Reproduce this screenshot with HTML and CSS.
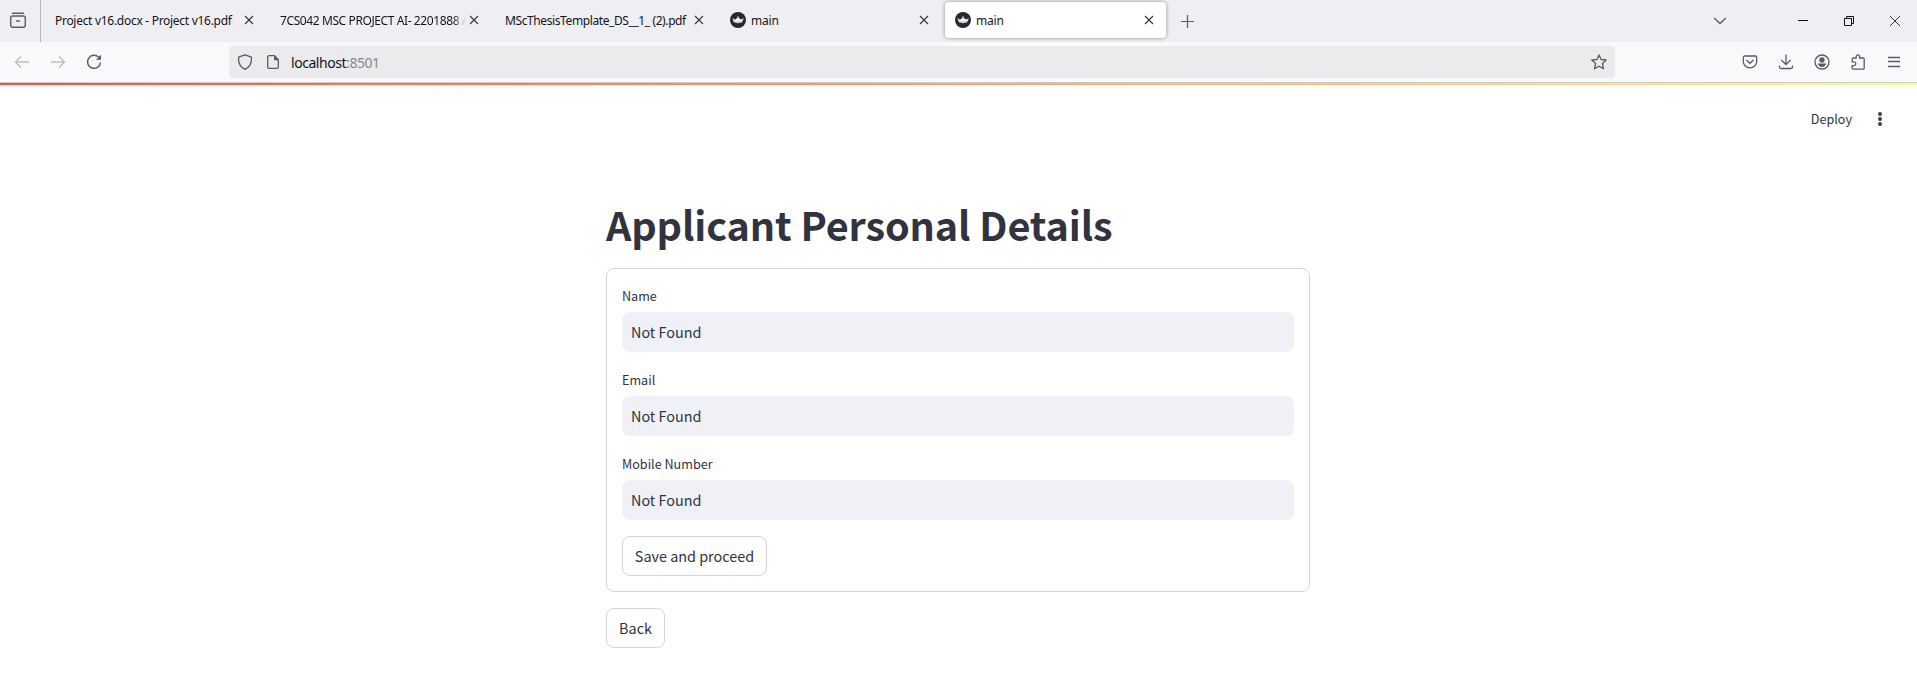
FILE: index.html
```
<!DOCTYPE html>
<html lang="en">
<head>
<meta charset="utf-8">
<title>main</title>
<link rel="stylesheet" href="styles.css">
</head>
<body>
<svg class="defs" width="0" height="0">
  <symbol id="close" viewBox="0 0 10 10"><path d="M1 1l8 8M9 1L1 9" fill="none" stroke="#36353f" stroke-width="1.1"/></symbol>
  <symbol id="crown" viewBox="0 0 16 16"><circle cx="8" cy="8" r="8" fill="#262730"/><path d="M2.2 6l2.900 1.400L8 5l2.900 2.400L13.800 6l-1.500 4.300c-2 1.100-6.600 1.100-8.600 0z" fill="#d0d0d3"/><path d="M4 9L8 6.500l4 1.400-.5 1.100z" fill="#fff"/><circle cx="8" cy="5" r=".8" fill="#ddd"/></symbol>
</svg>
<header class="browser">
  <div class="tabbar">
    <div class="recent"><svg width="16" height="16" viewBox="0 0 16 16" fill="none" stroke="#5b5b66" stroke-width="1.4"><path d="M2.500 1.200h11" stroke-linecap="round"/><rect x=".7" y="4" width="14.600" height="11.300" rx="2"/><path d="M6 9h4"/></svg></div>
    <div class="tabs">
      <div class="tab"><span class="tab-title t1">Project v16.docx - Project v16.pdf</span><svg class="x"><use href="#close"/></svg></div>
      <div class="tab"><span class="tab-title t2 fade">7CS042 MSC PROJECT AI- 2201888 A</span><svg class="x"><use href="#close"/></svg></div>
      <div class="tab"><span class="tab-title t3">MScThesisTemplate_DS__1_ (2).pdf</span><svg class="x"><use href="#close"/></svg></div>
      <div class="tab"><svg class="favicon"><use href="#crown"/></svg><span class="tab-title t4">main</span><svg class="x"><use href="#close"/></svg></div>
      <div class="tab active"><svg class="favicon"><use href="#crown"/></svg><span class="tab-title t4">main</span><svg class="x"><use href="#close"/></svg></div>
    </div>
    <svg class="plus" width="13" height="13" viewBox="0 0 13 13"><path d="M6.500 0v13M0 6.500h13" stroke="#5b5b66" stroke-width="1.200"/></svg>
    <div class="window">
      <svg width="14" height="14" viewBox="0 0 14 14" fill="none" stroke="#5b5b66" stroke-width="1.300"><path d="M1.200 4L7 9.500 12.800 4"/></svg>
      <svg class="min" width="10" height="10" viewBox="0 0 10 10"><path d="M0 4.500h10" stroke="#111"/></svg>
      <svg class="max" width="10" height="10" viewBox="0 0 10 10" fill="none" stroke="#111"><path d="M.5 2.500h7v7h-7zM2.500 2.500v-2h7v7h-2"/></svg>
      <svg class="quit" width="10" height="10" viewBox="0 0 10 10"><path d="M0 0l10 10M10 0L0 10" stroke="#222" stroke-width=".9"/></svg>
    </div>
  </div>
  <div class="toolbar">
    <div class="nav">
      <svg width="16" height="16" viewBox="0 0 16 16" fill="none" stroke="#bcbcc2" stroke-width="1.300"><path d="M15 8H1.500M7 2.500L1.500 8 7 13.500"/></svg>
      <svg width="16" height="16" viewBox="0 0 16 16" fill="none" stroke="#bcbcc2" stroke-width="1.300"><path d="M1 8h13.500M9 2.500L14.500 8 9 13.500"/></svg>
      <svg width="16" height="16" viewBox="0 0 16 16" fill="none" stroke="#5b5b66" stroke-width="1.500"><path d="M12.700 3.300A6.500 6.500 0 1 0 14.500 8.500"/><path d="M15 .8v5h-5z" fill="#5b5b66" stroke="none"/></svg>
    </div>
    <div class="urlbar">
      <svg width="16" height="16" viewBox="0 0 16 16" fill="none" stroke="#5b5b66" stroke-width="1.300"><path d="M8 .8l6.400 2.400v2.300c0 4.200-2.300 7.800-6.400 9.800-4.100-2-6.400-5.600-6.400-9.800V3.200z" stroke-linejoin="round"/></svg>
      <svg class="page" width="12" height="14" viewBox="0 0 12 14" fill="none" stroke="#5b5b66" stroke-width="1.300"><path d="M7.500.7H2A1.300 1.300 0 0 0 .7 2v10A1.300 1.300 0 0 0 2 13.300h8a1.300 1.300 0 0 0 1.300-1.300V4.500z"/><path d="M7 .5l4.800 4.800H7z" fill="#5b5b66" stroke="none"/></svg>
      <span class="url">localhost<span class="port">:8501</span></span>
      <svg class="star" width="16" height="16" viewBox="0 0 16 16" fill="none" stroke="#5b5b66" stroke-width="1.300" stroke-linejoin="round"><path d="M8 .9l2.100 4.600 5.100.5-3.800 3.500 1.100 5.300L8 12.200l-4.500 2.600 1.100-5.300L.8 6l5.100-.5z"/></svg>
    </div>
    <div class="actions">
      <svg width="16" height="16" viewBox="0 0 16 16" fill="none" stroke="#5b5b66" stroke-width="1.300"><path d="M2.700 2h10.600c.8 0 1.400.6 1.400 1.400V7.500a6.700 6.400 0 0 1-13.400 0V3.400C1.300 2.600 1.900 2 2.700 2z"/><path d="M4.500 6L8 9.300 11.500 6"/></svg>
      <svg width="16" height="16" viewBox="0 0 16 16" fill="none" stroke="#5b5b66" stroke-width="1.300"><path d="M8 .5v10M3.300 6L8 10.700 12.700 6M1.500 11.500v1.500c0 .9.600 1.500 1.500 1.500h10c.9 0 1.500-.6 1.500-1.500v-1.500"/></svg>
      <svg width="16" height="16" viewBox="0 0 16 16"><circle cx="8" cy="8" r="7" fill="none" stroke="#5b5b66" stroke-width="1.300"/><circle cx="8" cy="5.900" r="2.700" fill="#5b5b66"/><path d="M3.800 9.500h8.400c-.3 2-2 3.400-4.200 3.400s-3.900-1.400-4.200-3.400z" fill="#5b5b66"/></svg>
      <svg width="16" height="16" viewBox="0 0 16 16" fill="none" stroke="#5b5b66" stroke-width="1.300"><path d="M2.200 7.500V5c0-.7.300-1 1-1h3V2.500a1.700 1.700 0 0 1 3.400 0V4h3.600c.7 0 1 .3 1 1v9.300c0 .5-.3.800-.8.800H3c-.5 0-.8-.3-.8-.8v-2.600h1.600a1.900 1.900 0 0 0 0-3.900H1.600"/></svg>
      <svg width="16" height="16" viewBox="0 0 16 16"><path d="M2 3.500h12M2 7.500h12M2 12.500h12" stroke="#5b5b66" stroke-width="1.300"/></svg>
    </div>
  </div>
</header>
<div class="decoration"></div>
<div class="apphead">
  <span class="deploy">Deploy</span>
  <svg width="4" height="14" viewBox="0 0 4 14" fill="#31333f"><circle cx="2" cy="2" r="1.900"/><circle cx="2" cy="7" r="1.900"/><circle cx="2" cy="12" r="1.900"/></svg>
</div>
<main class="content">
  <h1 class="title">Applicant Personal Details</h1>
  <div class="form">
    <div class="label">Name</div>
    <div class="field">Not Found</div>
    <div class="label">Email</div>
    <div class="field">Not Found</div>
    <div class="label">Mobile Number</div>
    <div class="field">Not Found</div>
    <button class="btn save">Save and proceed</button>
  </div>
  <button class="btn back">Back</button>
</main>
</body>
</html>
```
FILE: styles.css
```
* { box-sizing: border-box; }
body {
  margin: 0;
  height: 698px;
  overflow: hidden;
  background: #fff;
  color: #31333f;
  font-family: "Noto Sans CJK SC", "Noto Sans", sans-serif;
}
svg { display: block; flex: none; }
.defs { position: absolute; }
.browser { font-family: "Noto Sans", sans-serif; height: 83px; border-bottom: 1px solid #ccccd0; background: #f9f9fb; }
.tabbar { display: flex; align-items: center; height: 42px; background: #efeef3; }
.recent { width: 41px; height: 42px; padding: 12px 0 0 10px; border-right: 1px solid #b8b7bd; }
.tabs { display: flex; gap: 4px; padding-left: 4px; height: 42px; }
.tab { display: flex; align-items: center; width: 221px; height: 36px; margin-top: 2px; padding: 0 12px 0 10px; border-radius: 4px; }
.active { background: #fff; box-shadow: 0 0 4px rgba(0, 0, 0, .4); }
.tab-title { color: #15141a; font-size: 12px; line-height: 18px; white-space: nowrap; overflow: hidden; flex: 1; padding-top: 1px; }
.t1 { letter-spacing: -.29px; }
.t2 { letter-spacing: -.4px; }
.t3 { letter-spacing: -.4px; }
.t4 { margin-left: 5px; letter-spacing: -.2px; }
.fade { mask-image: linear-gradient(to left, transparent 3px, #000 16px); }
.favicon { width: 16px; height: 16px; }
.x { width: 10px; height: 10px; }
.plus { margin-left: 15px; }
.window { display: flex; align-items: center; margin-left: auto; padding-right: 17px; }
.min { margin-left: 71px; }
.max { margin-left: 36px; }
.quit { margin-left: 36px; }
.toolbar { display: flex; align-items: center; height: 40px; }
.nav { display: flex; gap: 20px; padding-left: 14px; width: 229px; }
.urlbar { display: flex; align-items: center; width: 1386px; height: 32px; padding: 0 8px; border-radius: 4px; background: #ebebed; }
.page { margin-left: 14px; }
.url { margin-left: 12px; color: #15141a; font-size: 14px; line-height: 20px; letter-spacing: -.45px; padding-top: 1px; }
.port { color: #88888d; }
.star { margin-left: auto; }
.actions { display: flex; gap: 20px; margin-left: auto; padding-right: 15px; }
.decoration { height: 2px; background: linear-gradient(90deg, #ff4b4b, #fffd80); }
.apphead { display: flex; align-items: center; justify-content: flex-end; height: 68px; padding-right: 35px; gap: 26px; }
.deploy { font-size: 12.600px; line-height: 20px; }
.content { width: 704px; margin: 45px 0 0 606px; }
.title { margin: 0; font-size: 39.600px; line-height: 52px; font-weight: 700; height: 70px; letter-spacing: -.12px; white-space: nowrap; }
.form { height: 324px; padding: 15px; border: 1px solid #d6d6d8; border-radius: 8px; }
.label { height: 28px; font-size: 12.600px; line-height: 24px; }
.field { height: 40px; margin-bottom: 16px; padding: 0 9px; border-radius: 8px; background: #f0f1f6; font-size: 14.400px; line-height: 40px; }
.btn { display: flex; align-items: center; justify-content: center; height: 40px; padding: 0; border: 1px solid #d6d6d8; border-radius: 8px; background: #fff; color: #31333f; font-family: inherit; font-size: 14.400px; line-height: 24px; }
.save { width: 145px; }
.back { width: 59px; margin-top: 16px; }
```
